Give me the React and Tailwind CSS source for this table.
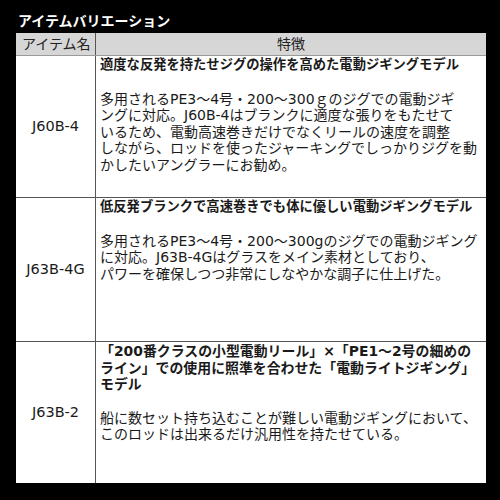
const rows = [
  {
    name: "J60B-4",
    h: "h-[142px]",
    titleSize: "text-[13.3px]",
    title: ["適度な反発を持たせジグの操作を高めた電動ジギングモデル"],
    body: [
      "多用されるPE3～4号・200～300ｇのジグでの電動ジギ",
      "ングに対応。J60B-4はブランクに適度な張りをもたせて",
      "いるため、電動高速巻きだけでなくリールの速度を調整",
      "しながら、ロッドを使ったジャーキングでしっかりジグを動",
      "かしたいアングラーにお勧め。",
    ],
  },
  {
    name: "J63B-4G",
    h: "h-[144px]",
    titleSize: "text-[13.3px]",
    title: ["低反発ブランクで高速巻きでも体に優しい電動ジギングモデル"],
    body: [
      "多用されるPE3～4号・200～300gのジグでの電動ジギング",
      "に対応。J63B-4Gはグラスをメイン素材としており、",
      "パワーを確保しつつ非常にしなやかな調子に仕上げた。",
    ],
  },
  {
    name: "J63B-2",
    h: "h-[141px]",
    titleSize: "text-[13.9px]",
    title: [
      "「200番クラスの小型電動リール」×「PE1～2号の細めの",
      "ライン」での使用に照準を合わせた「電動ライトジギング」",
      "モデル",
    ],
    body: [
      "船に数セット持ち込むことが難しい電動ジギングにおいて、",
      "このロッドは出来るだけ汎用性を持たせている。",
    ],
  },
];

export default function App() {
  return (
    <div
      className="w-[500px] h-[500px] bg-black overflow-hidden"
      style={{ fontFamily: '"DejaVu Sans", "Noto Sans CJK JP", sans-serif' }}
    >
      <h2 className="pt-[12px] pl-[18px] h-[33px] text-[14px] leading-[19px] font-bold text-white">
        アイテムバリエーション
      </h2>

      <div className="ml-[16px] w-[470px] bg-white text-[#1a1a1a]">
        {/* ヘッダー */}
        <div className="flex h-[23px] bg-[#d6d6d6] border-b border-[#9a9a9a] text-[14px] leading-[22px] text-[#222]">
          <div className="w-[80px] pl-[6px] border-r border-[#555]">アイテム名</div>
          <div className="flex-1 text-center">特徴</div>
        </div>

        {rows.map((r, i) => (
          <div
            key={r.name}
            className={"flex " + r.h + (i < rows.length - 1 ? " border-b border-[#555]" : "")}
          >
            <div className="w-[80px] flex items-center justify-center border-r border-[#555] text-[14.5px]">
              {r.name}
            </div>
            <div className="flex-1 pl-[4px] pt-[1px] whitespace-nowrap">
              <div className={r.titleSize + " leading-[16.5px] font-bold"}>
                {r.title.map((t) => (
                  <div key={t}>{t}</div>
                ))}
              </div>
              <div className="mt-[17px] text-[14px] leading-[16.5px]">
                {r.body.map((t) => (
                  <div key={t}>{t}</div>
                ))}
              </div>
            </div>
          </div>
        ))}
      </div>
    </div>
  );
}
